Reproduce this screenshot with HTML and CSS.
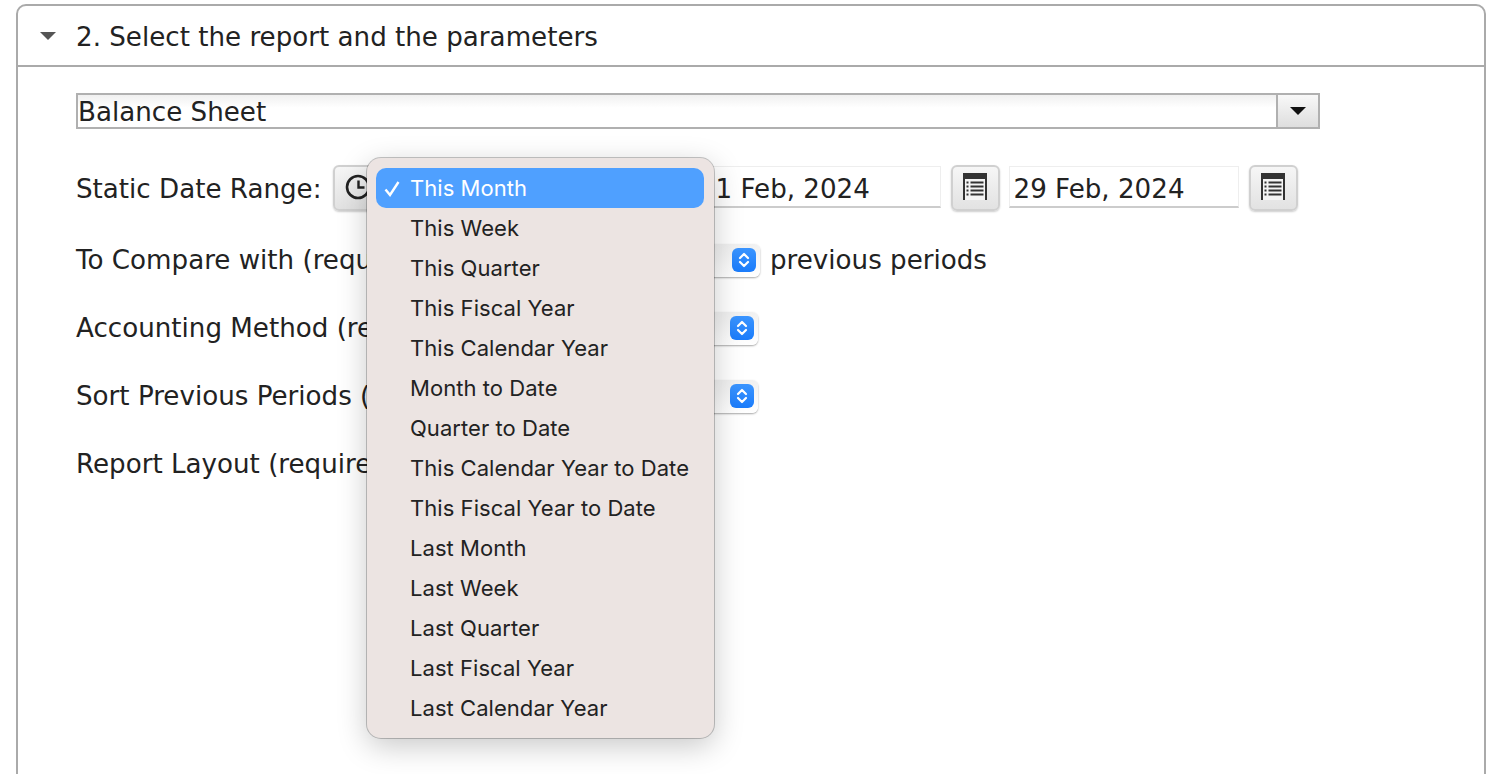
FILE: index.html
```html
<!DOCTYPE html>
<html lang="en">
<head>
<meta charset="utf-8">
<title>Report parameters</title>
<link rel="stylesheet" href="styles.css">
</head>
<body>
<section class="panel">
  <header class="panel-head">
    <svg class="twisty" width="16" height="10" viewBox="0 0 16 10"><path d="M0 1h16L8 9z" fill="#555"/></svg>
    <h2 class="panel-title">2. Select the report and the parameters</h2>
  </header>
  <div class="panel-body">
    <div class="combo">
      <span class="combo-text">Balance Sheet</span>
      <span class="combo-arrow"><svg width="16" height="10" viewBox="0 0 16 10"><path d="M0 1h16L8 9z" fill="#111"/></svg></span>
    </div>
    <div class="row row-dates">
      <span class="label">Static Date Range:</span>
      <button class="tool clock" type="button">
        <svg width="28" height="28" viewBox="0 0 28 28"><circle cx="14" cy="14" r="11" fill="none" stroke="#222" stroke-width="2.6"/><path d="M14.500 7.500v7h6" fill="none" stroke="#222" stroke-width="2.400"/></svg>
      </button>
      <span class="date first">1 Feb, 2024</span>
      <button class="tool cal" type="button">
        <svg width="24" height="27" viewBox="0 0 24 27"><rect width="24" height="27" fill="#333"/><rect x="2" y="6" width="20" height="21" fill="#f4f4f4"/><path d="M7.500 9.500h13M7.500 13.500h13M7.500 17.500h13M7.500 21.500h13" stroke="#333" stroke-width="2"/><path d="M3.500 9.500h2M3.500 13.500h2M3.500 17.500h2M3.500 21.500h2" stroke="#333" stroke-width="2"/></svg>
      </button>
      <span class="date">29 Feb, 2024</span>
      <button class="tool cal" type="button">
        <svg width="24" height="27" viewBox="0 0 24 27"><rect width="24" height="27" fill="#333"/><rect x="2" y="6" width="20" height="21" fill="#f4f4f4"/><path d="M7.500 9.500h13M7.500 13.500h13M7.500 17.500h13M7.500 21.500h13" stroke="#333" stroke-width="2"/><path d="M3.500 9.500h2M3.500 13.500h2M3.500 17.500h2M3.500 21.500h2" stroke="#333" stroke-width="2"/></svg>
      </button>
    </div>
    <div class="row row-compare">
      <span class="label">To Compare with (required):</span>
      <span class="select"><span class="stepper"><svg width="14" height="18" viewBox="0 0 14 18"><path d="M3 7l4-4 4 4M3 11l4 4 4-4" fill="none" stroke="#fff" stroke-width="2.200" stroke-linecap="round" stroke-linejoin="round"/></svg></span></span>
      <span class="after">previous periods</span>
    </div>
    <div class="row row-select">
      <span class="label">Accounting Method (required):</span>
      <span class="select"><span class="stepper"><svg width="14" height="18" viewBox="0 0 14 18"><path d="M3 7l4-4 4 4M3 11l4 4 4-4" fill="none" stroke="#fff" stroke-width="2.200" stroke-linecap="round" stroke-linejoin="round"/></svg></span></span>
    </div>
    <div class="row row-select">
      <span class="label">Sort Previous Periods (required):</span>
      <span class="select"><span class="stepper"><svg width="14" height="18" viewBox="0 0 14 18"><path d="M3 7l4-4 4 4M3 11l4 4 4-4" fill="none" stroke="#fff" stroke-width="2.200" stroke-linecap="round" stroke-linejoin="round"/></svg></span></span>
    </div>
    <div class="row row-select">
      <span class="label">Report Layout (required):</span>
    </div>
  </div>
</section>
<ul class="menu">
  <li class="item selected"><svg class="check" width="18" height="16" viewBox="0 0 18 16"><path d="M2.500 8.500l4.500 5.500 8.500-13" fill="none" stroke="#fff" stroke-width="2.400"/></svg>This Month</li>
  <li class="item">This Week</li>
  <li class="item">This Quarter</li>
  <li class="item">This Fiscal Year</li>
  <li class="item">This Calendar Year</li>
  <li class="item">Month to Date</li>
  <li class="item">Quarter to Date</li>
  <li class="item">This Calendar Year to Date</li>
  <li class="item">This Fiscal Year to Date</li>
  <li class="item">Last Month</li>
  <li class="item">Last Week</li>
  <li class="item">Last Quarter</li>
  <li class="item">Last Fiscal Year</li>
  <li class="item">Last Calendar Year</li>
</ul>
</body>
</html>
```
FILE: styles.css
```css
html, body {
  margin: 0;
  height: 774px;
  overflow: hidden;
  background: #fff;
}
body {
  font-family: "DejaVu Sans", Verdana, sans-serif;
  font-size: 26.15px;
  color: #222;
}
.panel {
  margin: 4px 16px 0 16px;
  height: 800px;
  border: 2px solid #aaa;
  border-radius: 10px 10px 0 0;
  box-sizing: border-box;
}
.panel-head {
  display: flex;
  align-items: center;
  height: 59px;
  border-bottom: 2px solid #aaa;
  padding-left: 22px;
}
.twisty { margin: 1px 20px 0 0; }
.panel-title {
  margin: 0;
  padding-top: 2px;
  font: inherit;
}
.panel-body {
  padding: 26px 0 0 58px;
}
.combo {
  display: flex;
  width: 1244px;
  height: 36px;
  box-sizing: border-box;
  border: 2px solid #b0b0b0;
  background: linear-gradient(#f0f0f0, #fff 40%);
}
.combo-text {
  flex: 1;
  padding-top: 2px;
  line-height: 31px;
}
.combo-arrow {
  width: 40px;
  border-left: 2px solid #b0b0b0;
  background: linear-gradient(#f8f8f8, #dedede);
  display: flex;
  align-items: center;
  justify-content: center;
}
.row {
  display: flex;
  align-items: center;
}
.row-dates { margin-top: 36px; height: 46px; }
.row-dates .label { padding-top: 2px; }
.row-compare { margin-top: 32px; height: 34px; }
.row-select { margin-top: 34px; height: 34px; }
.label { white-space: nowrap; }
.row-compare .label { width: 564px; }
.row-select .label { width: 562px; }
.after { margin-left: 10px; white-space: nowrap; }
.tool {
  width: 49px;
  height: 46px;
  padding: 0;
  display: flex;
  align-items: center;
  justify-content: center;
  border: 2px solid #d0d0d0;
  border-radius: 6px;
  background: linear-gradient(#f6f6f6, #e2e2e2);
  box-shadow: 0 1px 2px rgba(0,0,0,.2);
}
.tool svg { margin-bottom: 3px; }
.clock { width: 50px; margin-left: 11px; }
.date {
  width: 230px;
  height: 42px;
  box-sizing: border-box;
  padding-left: 4px;
  line-height: 45px;
  margin-bottom: 3px;
  border: 1px solid #eee;
  border-bottom: 2px solid #ccc;
  background: #fff;
}
.first { margin-left: 328px; margin-right: 10px; }
.cal + .date { margin-left: 9px; margin-right: 10px; }
.select {
  display: flex;
  align-items: center;
  justify-content: flex-end;
  width: 120px;
  height: 33px;
  box-sizing: border-box;
  padding-right: 4px;
  border-radius: 6px;
  background: linear-gradient(#f0f0f0, #fff);
  box-shadow: 0 1px 2px rgba(0,0,0,.35);
}
.stepper {
  width: 24px;
  height: 24px;
  display: flex;
  align-items: center;
  justify-content: center;
  border-radius: 6px;
  background: linear-gradient(#3b95ff, #1b7cfb);
}
.menu {
  position: absolute;
  left: 367px;
  top: 158px;
  width: 347px;
  height: 580px;
  box-sizing: border-box;
  margin: 0;
  padding: 10px 10px 10px 9px;
  list-style: none;
  background: #ece4e2;
  border-radius: 14px;
  box-shadow: 0 0 0 1px rgba(0,0,0,.22), 0 8px 30px rgba(0,0,0,.22);
  font-family: Inter, sans-serif;
  font-size: 22px;
  letter-spacing: .05px;
}
.item {
  position: relative;
  height: 40px;
  line-height: 40px;
  padding-left: 34px;
  white-space: nowrap;
}
.selected {
  background: #4fa0ff;
  color: #fff;
  border-radius: 10px;
}
.check {
  position: absolute;
  left: 7px;
  top: 13px;
}
```
